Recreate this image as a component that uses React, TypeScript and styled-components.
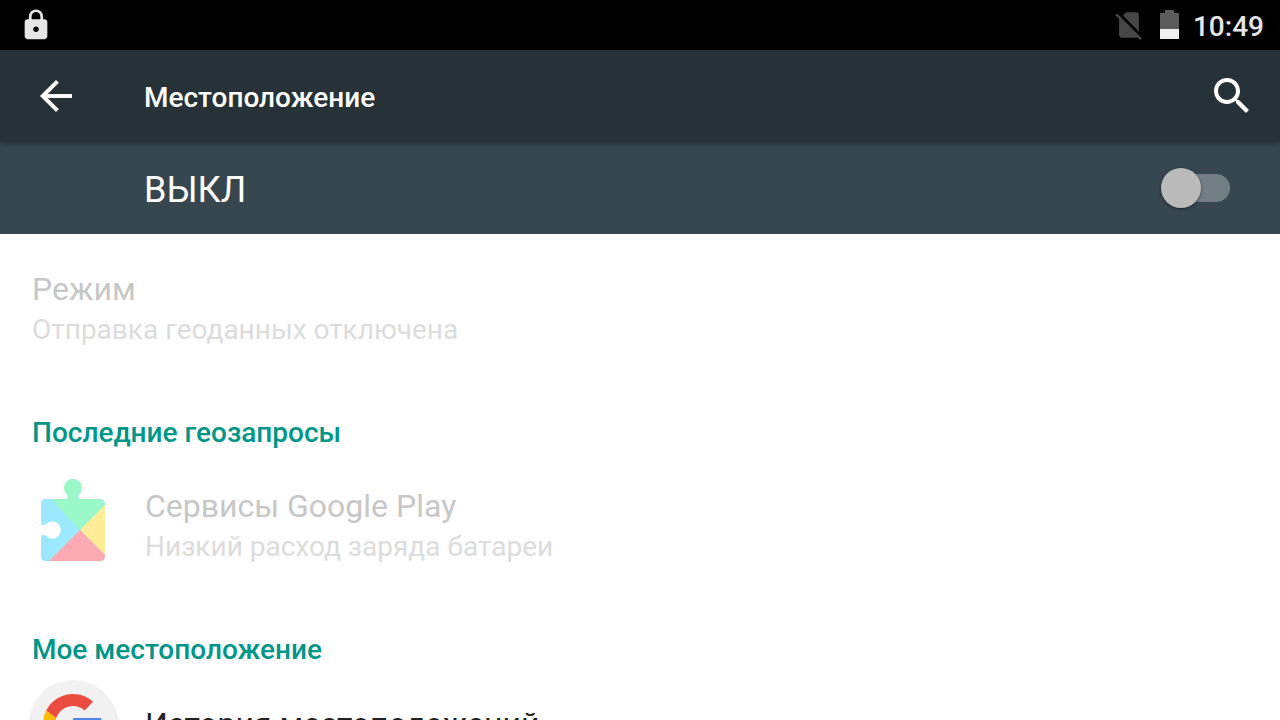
import React, { useState } from 'react';
import styled, { createGlobalStyle } from 'styled-components';

const GlobalStyle = createGlobalStyle`
  * { box-sizing: border-box; }
  body {
    margin: 0;
    background: #fff;
    font-family: Roboto, "Noto Sans", sans-serif;
  }
  h1, h2, p { margin: 0; font-weight: 400; }
`;

const Screen = styled.div`
  height: 100vh;
  display: flex;
  flex-direction: column;
  overflow: hidden;
`;

const StatusBar = styled.div`
  flex: none;
  height: 50px;
  padding: 0 16px 0 19px;
  display: flex;
  align-items: center;
  justify-content: space-between;
  background: #000;
  color: #e6e6e6;
`;

const StatusGroup = styled.div`
  display: flex;
  align-items: center;
  gap: 14px;

  svg { display: block; }
`;

const Clock = styled.time`
  padding-top: 4px;
  font-size: 28px;
  line-height: 32px;
  font-weight: 500;
`;

const Toolbar = styled.header`
  position: relative;
  flex: none;
  height: 92px;
  padding: 0 24px 0 32px;
  display: flex;
  align-items: center;
  background: #273238;
  color: #fff;
  box-shadow: 0 1px 6px rgba(0, 0, 0, 0.4);
`;

const IconButton = styled.button`
  width: 48px;
  height: 48px;
  padding: 0;
  border: 0;
  background: none;
  color: inherit;
  cursor: pointer;

  svg { display: block; }
`;

const PageTitle = styled.h1`
  flex: 1;
  padding: 4px 0 0 64px;
  font-size: 28px;
  line-height: 40px;
  font-weight: 500;
`;

const SwitchBar = styled.label`
  flex: none;
  height: 92px;
  padding: 0 50px 0 144px;
  display: flex;
  align-items: center;
  justify-content: space-between;
  background: #37474f;
  color: #fff;
  font-size: 36px;
  line-height: 40px;
`;

const SwitchText = styled.span`
  padding-top: 4px;
`;

const Switch = styled.input`
  appearance: none;
  width: 69px;
  height: 40px;
  margin: 0;
  display: grid;
  align-items: center;
  cursor: pointer;

  &::before,
  &::after {
    content: '';
    grid-area: 1 / 1;
  }
  &::before {
    height: 28px;
    margin-left: 6px;
    border-radius: 14px;
    background: #737f85;
  }
  &::after {
    width: 40px;
    height: 40px;
    border-radius: 50%;
    background: #bababa;
    box-shadow: 0 1px 3px rgba(0, 0, 0, 0.5);
  }
  &:checked::before { background: #1b7a74; }
  &:checked::after { justify-self: end; background: #009688; }
`;

const Content = styled.main`
  flex: 1;
  min-height: 0;
  padding-top: 2px;
  overflow-y: auto;
  scrollbar-width: none;
`;

const SectionTitle = styled.h2`
  padding: 29px 32px 0;
  color: #009688;
  font-size: 28px;
  line-height: 40px;
  font-weight: 500;
`;

const Row = styled.div<{ $size: 'tall' | 'compact'; $icon?: boolean }>`
  min-height: ${(p) => (p.$size === 'tall' ? 148 : 108)}px;
  padding: 0 32px 0 ${(p) => (p.$icon ? 24 : 32)}px;
  display: flex;
  align-items: center;
  gap: 25px;

  svg { flex: none; display: block; }
`;

const RowTitle = styled.p<{ $disabled?: boolean }>`
  color: ${(p) => (p.$disabled ? '#c7c7c7' : '#212121')};
  font-size: 32px;
  line-height: 40px;
`;

const RowSummary = styled.p`
  color: #dcdcdc;
  font-size: 28px;
  line-height: 42px;
`;

const LockIcon = () => (
  <svg width="34" height="34" viewBox="0 0 24 24" fill="currentColor" aria-hidden="true">
    <path d="M18 8h-1V6c0-2.76-2.24-5-5-5S7 3.24 7 6v2H6c-1.1 0-2 .9-2 2v10c0 1.1.9 2 2 2h12c1.1 0 2-.9 2-2V10c0-1.1-.9-2-2-2zm-6 9c-1.1 0-2-.9-2-2s.9-2 2-2 2 .9 2 2-.9 2-2 2zm3.1-9H8.9V6c0-1.71 1.39-3.1 3.1-3.1 1.71 0 3.1 1.39 3.1 3.1v2z" />
  </svg>
);

const NoSimIcon = () => (
  <svg width="34" height="34" viewBox="0 0 24 24" fill="#464646" aria-hidden="true">
    <path d="M18.99 5c0-1.1-.89-2-1.99-2h-7L7.66 5.34 19 16.68 18.99 5zM3.65 3.88L2.38 5.15 5 7.77V19c0 1.1.9 2 2 2h10.01c.35 0 .67-.1.96-.26l1.88 1.88 1.27-1.27L3.65 3.88z" />
  </svg>
);

const BatteryIcon = () => (
  <svg width="19" height="34" viewBox="0 0 19 34" aria-hidden="true">
    <path d="M5 2H14V5H19V21H0V5H5Z" fill="#5c5c5c" />
    <path d="M0 21H19V31H0Z" fill="#f0f0f0" />
  </svg>
);

const BackIcon = () => (
  <svg width="48" height="48" viewBox="0 0 24 24" fill="currentColor" aria-hidden="true">
    <path d="M20 11H7.83l5.59-5.59L12 4l-8 8 8 8 1.41-1.41L7.83 13H20v-2z" />
  </svg>
);

const SearchIcon = () => (
  <svg width="48" height="48" viewBox="0 0 24 24" fill="currentColor" aria-hidden="true">
    <path d="M15.5 14h-.79l-.28-.27C15.41 12.59 16 11.11 16 9.500 16 5.91 13.09 3 9.500 3S3 5.91 3 9.500 5.91 16 9.500 16c1.61 0 3.09-.59 4.23-1.57l.27.28v.79l5 4.99L20.49 19l-4.99-5zm-6 0C7.01 14 5 11.99 5 9.500S7.01 5 9.500 5 14 7.01 14 9.500 11.99 14 9.500 14z" />
  </svg>
);

const PlayServicesIcon = () => (
  <svg width="96" height="96" viewBox="0 0 96 96" aria-hidden="true">
    <defs>
      <clipPath id="puzzle">
        <path d="M22 20H40.500Q44 20 43.500 17L42 14.500A9 9 0 1 1 56 14.500L54.500 17Q54 20 57.500 20H76Q81 20 81 25V77Q81 82 76 82H22Q17 82 17 77V58.500Q17 56 19 56Q21 56 22.500 57.500A8.700 8.700 0 1 0 22.500 44.500Q21 46 19 46Q17 46 17 43.500V25Q17 20 22 20Z" />
      </clipPath>
    </defs>
    <g clipPath="url(#puzzle)">
      <path d="M0 0H96V96H0Z" fill="#9bf7c7" />
      <path d="M11 0V96H11L56 51L25 18Z" fill="#9be8ff" />
      <path d="M56 51L96 11V91Z" fill="#ffec98" />
      <path d="M56 51L11 96H101Z" fill="#fbaab4" />
    </g>
  </svg>
);

const GoogleIcon = () => (
  <svg width="96" height="96" viewBox="0 0 96 96" aria-hidden="true">
    <circle cx="49.500" cy="49" r="44.300" fill="#d9d9d9" />
    <circle cx="49" cy="48" r="44" fill="#f1f1f1" />
    <g transform="translate(19 18) scale(1.25)">
      <path fill="#ea4c40" d="M24 9.500c3.540 0 6.710 1.220 9.210 3.600l6.850-6.850C35.900 2.380 30.470 0 24 0 14.620 0 6.510 5.380 2.560 13.220l7.980 6.190C12.430 13.720 17.740 9.500 24 9.500z" />
      <path fill="#4f86ec" d="M46.980 24.550c0-1.850-.150-3.700-.480-5.350H24v9.820h12.940c-.580 2.960-2.260 5.480-4.780 7.180l7.730 6c4.510-4.180 7.090-10.360 7.090-17.650z" />
      <path fill="#fbbc05" d="M10.530 28.590c-.480-1.450-.760-2.990-.760-4.590s.270-3.140.760-4.590l-7.980-6.190C.920 16.460 0 20.120 0 24c0 3.880.920 7.540 2.560 10.780l7.970-6.190z" />
      <path fill="#34a853" d="M24 48c6.480 0 11.930-2.130 15.890-5.810l-7.730-6c-2.150 1.450-4.920 2.300-8.160 2.300-6.260 0-11.570-4.220-13.470-9.910l-7.980 6.190C6.510 42.620 14.620 48 24 48z" />
    </g>
  </svg>
);

export default function App() {
  const [enabled, setEnabled] = useState(false);

  return (
    <Screen>
      <GlobalStyle />
      <StatusBar>
        <LockIcon />
        <StatusGroup>
          <NoSimIcon />
          <BatteryIcon />
          <Clock>10:49</Clock>
        </StatusGroup>
      </StatusBar>
      <Toolbar>
        <IconButton type="button" aria-label="Назад"><BackIcon /></IconButton>
        <PageTitle>Местоположение</PageTitle>
        <IconButton type="button" aria-label="Поиск"><SearchIcon /></IconButton>
      </Toolbar>
      <SwitchBar>
        <SwitchText>{enabled ? 'ВКЛ' : 'ВЫКЛ'}</SwitchText>
        <Switch
          type="checkbox"
          role="switch"
          checked={enabled}
          onChange={(e) => setEnabled(e.target.checked)}
        />
      </SwitchBar>
      <Content>
        <Row $size="tall">
          <div>
            <RowTitle $disabled>Режим</RowTitle>
            <RowSummary>Отправка геоданных отключена</RowSummary>
          </div>
        </Row>
        <SectionTitle>Последние геозапросы</SectionTitle>
        <Row $size="tall" $icon>
          <PlayServicesIcon />
          <div>
            <RowTitle $disabled>Сервисы Google Play</RowTitle>
            <RowSummary>Низкий расход заряда батареи</RowSummary>
          </div>
        </Row>
        <SectionTitle>Мое местоположение</SectionTitle>
        <Row $size="compact" $icon>
          <GoogleIcon />
          <RowTitle>История местоположений</RowTitle>
        </Row>
      </Content>
    </Screen>
  );
}
